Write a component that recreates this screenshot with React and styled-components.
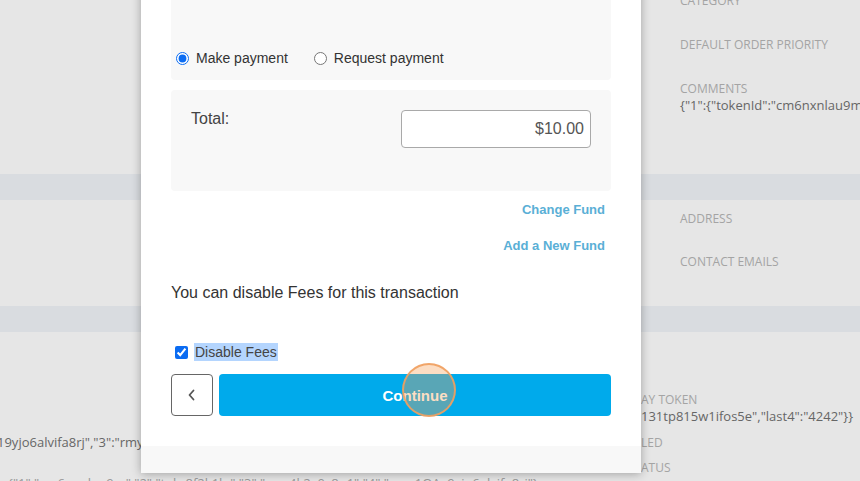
import React from "react";
import styled, { createGlobalStyle } from "styled-components";

const GlobalStyle = createGlobalStyle`
  html, body {
    margin: 0;
    padding: 0;
    height: 100%;
    overflow: hidden;
    background: #e6e6e6;
  }
  body {
    font-family: "Open Sans", "DejaVu Sans", sans-serif;
  }
  #root {
    position: relative;
    display: flow-root;
    height: 100%;
  }
`;

/* ---------- background page ---------- */

const Page = styled.div`
  margin-top: -8px;
  display: flex;
  flex-direction: column;
`;

const Section = styled.section`
  box-sizing: border-box;
  height: ${({ $h }) => $h}px;
  padding: ${({ $pt }) => $pt || 0}px 0 0 680px;
  display: flex;
  flex-direction: column;
  gap: ${({ $gap }) => $gap}px;
`;

const Band = styled.div`
  height: 26px;
  background: #d9dce0;
`;

const Field = styled.div`
  display: flex;
  flex-direction: column;
`;

const Label = styled.div`
  font-size: 12px;
  line-height: 17px;
  color: #a4a4a4;
  text-transform: uppercase;
  white-space: nowrap;
`;

const Value = styled.div`
  font-size: 13px;
  line-height: 17px;
  color: #666;
  white-space: nowrap;
  margin-left: ${({ $shift }) => $shift || 0}px;
`;

const Faint = styled(Value)`
  color: #999;
  padding-left: 8px;
`;

const DetailGrid = styled.div`
  display: grid;
  grid-template-columns: 641px 1fr;
  grid-template-rows: 17px 17px 26px 25px 16px;
  align-items: end;
  padding-top: 59px;
  overflow: hidden;
`;

const Wide = styled.div`
  grid-column: 1 / -1;
`;

/* ---------- modal ---------- */

const Modal = styled.div`
  position: absolute;
  left: 141px;
  top: -40px;
  width: 500px;
  background: #fff;
  box-shadow: 0 1px 9px rgba(0, 0, 0, 0.3);
  font-family: "Liberation Sans", Arial, sans-serif;
`;

const ModalBody = styled.div`
  padding: 20px 30px 30px;
  display: flex;
  flex-direction: column;
`;

const Panel = styled.div`
  background: #f8f8f8;
  border-radius: 4px;
  box-sizing: border-box;
`;

const PaymentPanel = styled(Panel)`
  height: 100px;
  display: flex;
  align-items: flex-end;
  gap: 26px;
  padding: 0 0 12px 5px;
`;

const Option = styled.label`
  display: flex;
  align-items: center;
  gap: 7px;
  font-size: 14px;
  line-height: 20px;
  color: #333;
`;

const Radio = styled.input.attrs({ type: "radio", name: "mode" })`
  margin: 0;
  width: 13px;
  height: 13px;
  accent-color: #0b6cf2;
`;

const TotalPanel = styled(Panel)`
  margin-top: 10px;
  padding: 20px 20px 43px;
  display: flex;
  justify-content: space-between;
  align-items: flex-start;
`;

const TotalLabel = styled.span`
  font-size: 16px;
  line-height: 18px;
  color: #444;
`;

const AmountInput = styled.input`
  box-sizing: border-box;
  width: 190px;
  height: 38px;
  border: 1px solid #a9a9a9;
  border-radius: 4px;
  padding: 0 6px;
  text-align: right;
  font-family: inherit;
  font-size: 16px;
  color: #555;
  background: #fff;
  outline: none;
`;

const FundLink = styled.a`
  align-self: flex-end;
  margin: ${({ $mt }) => $mt}px 6px 0 0;
  font-size: 13px;
  font-weight: bold;
  line-height: 18px;
  color: #5aafd6;
  text-decoration: none;
`;

const Notice = styled.p`
  margin: 29px 0 0;
  font-size: 16px;
  line-height: 18px;
  color: #333;
`;

const CheckRow = styled.label`
  margin-top: 41px;
  padding-left: 4px;
  display: flex;
  align-items: center;
  gap: 6px;
  font-size: 14px;
  line-height: 18px;
  color: #444;
`;

const Checkbox = styled.input.attrs({ type: "checkbox" })`
  margin: 0;
  width: 13px;
  height: 13px;
  accent-color: #0b6cf2;
`;

const Selected = styled.span`
  background: #b4d5fe;
  padding: 0 1px;
`;

const Actions = styled.div`
  margin-top: 13px;
  height: 42px;
  display: flex;
  gap: 6px;
`;

const BackButton = styled.button`
  width: 42px;
  flex: none;
  border: 1px solid #666;
  border-radius: 4px;
  background: #fff;
  display: flex;
  align-items: center;
  justify-content: center;
  padding: 0;
`;

const ContinueButton = styled.button`
  position: relative;
  flex: 1;
  border: none;
  border-radius: 4px;
  background: #00aaeb;
  color: #fff;
  font-family: inherit;
  font-size: 15px;
  font-weight: bold;
`;

const ClickRing = styled.span`
  position: absolute;
  left: 183px;
  top: -11px;
  width: 54px;
  height: 54px;
  box-sizing: border-box;
  border-radius: 50%;
  border: 2px solid rgba(240, 160, 95, 0.9);
  background: rgba(247, 160, 90, 0.36);
  pointer-events: none;
`;

const Footer = styled.div`
  height: 27px;
  background: #f8f8f8;
`;

const Chevron = () => (
  <svg width="10" height="12" viewBox="0 0 10 12" fill="none">
    <path
      d="M6.5 1.5 L2.5 6 L6.5 10.5"
      stroke="#555"
      strokeWidth="1.8"
      strokeLinecap="round"
      strokeLinejoin="round"
    />
  </svg>
);

const App = () => {
  return (
    <>
      <GlobalStyle />
      <Page>
        <Section $h={182} $gap={27}>
          <Label>Category</Label>
          <Label>Default Order Priority</Label>
          <Field>
            <Label>Comments</Label>
            <Value>{'{"1":{"tokenId":"cm6nxnlau9m4a2k81zq0","last4":"4242"}}'}</Value>
          </Field>
        </Section>
        <Band />
        <Section $h={106} $pt={10} $gap={26}>
          <Label>Address</Label>
          <Label>Contact Emails</Label>
        </Section>
        <Band />
        <DetailGrid>
          <span />
          <Label>AY TOKEN</Label>
          <span />
          <Value>{'131tp815w1ifos5e","last4":"4242"}}'}</Value>
          <Value $shift={-3}>{'19yjo6alvifa8rj","3":"rmy4k2x0c8n1'}</Value>
          <Label>LED</Label>
          <span />
          <Label>ATUS</Label>
          <Wide>
            <Faint>{'{"1":"cm6nxnlau9m","2":"tok_8f2k1lq","3":"rmy4k2x0c8n1","4":"pm_1QAx9yjo6alvifa8rj"}'}</Faint>
          </Wide>
        </DetailGrid>
      </Page>

      <Modal>
        <ModalBody>
          <PaymentPanel>
            <Option>
              <Radio defaultChecked />
              Make payment
            </Option>
            <Option>
              <Radio />
              Request payment
            </Option>
          </PaymentPanel>

          <TotalPanel>
            <TotalLabel>Total:</TotalLabel>
            <AmountInput defaultValue="$10.00" readOnly />
          </TotalPanel>

          <FundLink href="#" $mt={10}>Change Fund</FundLink>
          <FundLink href="#" $mt={18}>Add a New Fund</FundLink>

          <Notice>You can disable Fees for this transaction</Notice>

          <CheckRow>
            <Checkbox defaultChecked />
            <Selected>Disable Fees</Selected>
          </CheckRow>

          <Actions>
            <BackButton aria-label="Back">
              <Chevron />
            </BackButton>
            <ContinueButton>
              Continue
              <ClickRing />
            </ContinueButton>
          </Actions>
        </ModalBody>
        <Footer />
      </Modal>
    </>
  );
};

export default App;
